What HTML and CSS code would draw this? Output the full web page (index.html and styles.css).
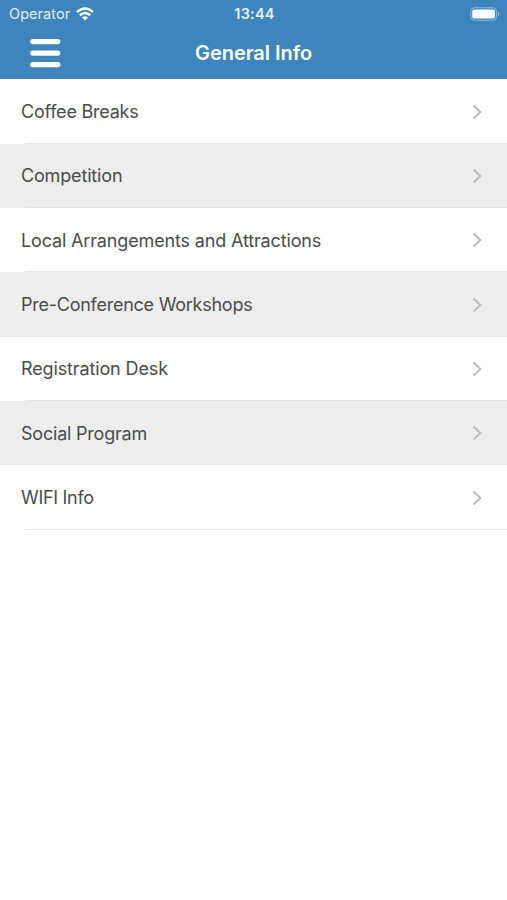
FILE: index.html
```html
<!DOCTYPE html>
<html lang="en">
<head>
<meta charset="utf-8">
<title>General Info</title>
<link rel="stylesheet" href="styles.css">
</head>
<body>
<header class="header">
  <div class="status">
    <div class="carrier"><span class="operator">Operator</span>
      <svg class="wifi" width="18" height="14" viewBox="0 0 18 14" fill="none" stroke="#fff" stroke-width="2.5"><path d="M.9 5.1Q9-2.2 17.1 5.1M3.8 8.2Q9 3.7 14.2 8.2"/><path d="M6.1 10.5Q9 8.2 11.9 10.5L9 13.6Z" fill="#fff" stroke="none"/></svg>
    </div>
    <span class="time">13:44</span>
    <svg class="battery" width="30" height="14" viewBox="0 0 30 14"><rect x=".8" y=".8" width="25.6" height="12.4" rx="3.4" fill="none" stroke="#8dbbe0"/><rect x="2.3" y="2.4" width="22.6" height="9.2" rx="1.8" fill="#fff"/><path d="M28 4.7q2.4 2.3 0 4.6z" fill="#9ec3e0"/></svg>
  </div>
  <div class="nav">
    <svg class="menu" width="32" height="30" viewBox="0 0 32 30" stroke="#fff" stroke-width="5.2" stroke-linecap="round"><path d="M3.8 3.6H28.8M3.8 15.1H28.8M3.8 26.6H28.8"/></svg>
    <h1 class="title">General Info</h1>
  </div>
</header>
<ul class="list">
  <li class="row"><span class="label l1">Coffee Breaks</span><svg class="chev" viewBox="0 0 10 16"><path d="M1.5 1.5L8.3 8L1.5 14.5"/></svg></li>
  <li class="row"><span class="label l2">Competition</span><svg class="chev" viewBox="0 0 10 16"><path d="M1.5 1.5L8.3 8L1.5 14.5"/></svg></li>
  <li class="row"><span class="label l3">Local Arrangements and Attractions</span><svg class="chev" viewBox="0 0 10 16"><path d="M1.5 1.5L8.3 8L1.5 14.5"/></svg></li>
  <li class="row"><span class="label l4">Pre-Conference Workshops</span><svg class="chev" viewBox="0 0 10 16"><path d="M1.5 1.5L8.3 8L1.5 14.5"/></svg></li>
  <li class="row"><span class="label l5">Registration Desk</span><svg class="chev" viewBox="0 0 10 16"><path d="M1.5 1.5L8.3 8L1.5 14.5"/></svg></li>
  <li class="row"><span class="label l6">Social Program</span><svg class="chev" viewBox="0 0 10 16"><path d="M1.5 1.5L8.3 8L1.5 14.5"/></svg></li>
  <li class="row"><span class="label l7">WIFI Info</span><svg class="chev" viewBox="0 0 10 16"><path d="M1.5 1.5L8.3 8L1.5 14.5"/></svg></li>
</ul>
</body>
</html>
```
FILE: styles.css
```css
* { box-sizing: border-box; }
body { margin: 0; background: #fff; color: #4b4b4b; font-family: Inter, sans-serif; }
.header { height: 79.4px; background: #3e85be; color: #fff; }
.status { display: grid; grid-template-columns: 1fr auto 1fr; align-items: center; height: 27px; padding: 0 7px 0 9px; }
.carrier { display: flex; align-items: center; gap: 6px; font-size: 14.5px; color: #e4f0fa; }
.operator { letter-spacing: 0.05px; }
.time { font-size: 14.5px; font-weight: 600; letter-spacing: 0.2px; color: #e9f3fb; }
.battery { justify-self: end; }
.nav { display: grid; grid-template-columns: 1fr auto 1fr; align-items: center; height: 51px; padding: 0 29px; }
.title { margin: 0; font-size: 20px; font-weight: 600; letter-spacing: -0.05px; }
.list { margin: 0; padding: 0; list-style: none; }
.row { display: flex; align-items: center; justify-content: space-between; height: 64.35px; padding: 0 25px 0 21px; background: linear-gradient(#e6e6e6, #e6e6e6) 25px 100% / 100% 1px no-repeat; }
.row:nth-child(even) { background-color: #eee; }
.label { font-size: 18px; white-space: nowrap; }
.l1 { letter-spacing: -0.23px; }
.l2 { letter-spacing: -0.16px; }
.l3 { letter-spacing: -0.15px; }
.l4 { letter-spacing: -0.25px; }
.l5 { letter-spacing: -0.13px; }
.l6 { letter-spacing: -0.21px; }
.l7 { letter-spacing: -0.31px; }
.chev { width: 10px; height: 16px; fill: none; stroke: #bfbfc2; stroke-width: 2.2; }
```
